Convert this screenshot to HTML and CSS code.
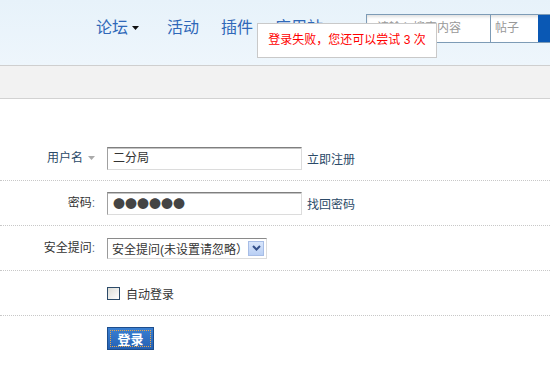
FILE: index.html
```html
<!DOCTYPE html>
<html lang="zh-CN">
<head>
    <meta charset="UTF-8">
    <meta name="viewport" content="width=device-width, initial-scale=1.0">
    <title>登录</title>
    <link rel="stylesheet" href="styles.css">
</head>
<body>

<div class="header">
    <ul class="nav">
        <li class="nav-item has-menu">论坛<svg class="caret" width="7" height="4" viewBox="0 0 7 4"><path d="M0 0H7L3.5 4Z" fill="#111"/></svg></li>
        <li class="nav-item">活动</li>
        <li class="nav-item">插件</li>
        <li class="nav-item">应用站</li>
    </ul>
    <div class="search">
        <span class="search-input">请输入搜索内容</span>
        <span class="search-type">帖子</span>
        <span class="search-btn"></span>
    </div>
    <div class="notice">登录失败，您还可以尝试 <span class="count">3</span> 次</div>
</div>
<div class="subbar"></div>

<div class="login">
    <div class="row">
        <span class="label label-user">用户名<svg class="tri" width="7" height="4" viewBox="0 0 7 4"><path d="M0 0H7L3.5 4Z" fill="#aaa"/></svg></span>
        <span class="field">二分局</span>
        <a class="link" href="#">立即注册</a>
    </div>
    <div class="row">
        <span class="label">密码<span class="colon">:</span></span>
        <span class="field field-pass">●●●●●●</span>
        <a class="link" href="#">找回密码</a>
    </div>
    <div class="row">
        <span class="label">安全提问<span class="colon">:</span></span>
        <span class="select">安全提问(未设置请忽略）<span class="select-arrow"><svg width="9" height="6" viewBox="0 0 9 6"><path d="M1 1L4.5 4.5L8 1" stroke="#34508a" stroke-width="2" fill="none"/></svg></span></span>
    </div>
    <div class="row">
        <span class="label"></span>
        <span class="checkbox"></span>
        <span class="check-text">自动登录</span>
    </div>
    <div class="row row-last">
        <span class="label"></span>
        <button class="submit">登录</button>
    </div>
</div>

</body>
</html>
```

FILE: styles.css
```css
body {
    margin: 0;
    width: 550px;
    overflow: hidden;
    font-family: "Liberation Sans", "Noto Sans CJK SC", sans-serif;
    font-size: 12px;
    color: #333;
    background: #fff;
}

.header {
    position: relative;
    display: flex;
    align-items: center;
    height: 56px;
    padding-bottom: 9px;
    background: linear-gradient(#e7f2fa, #eef6fc);
    border-bottom: 1px solid #cfcfcf;
    overflow: hidden;
    white-space: nowrap;
}

.nav {
    display: flex;
    flex-shrink: 0;
    margin: 0 0 0 96px;
    padding: 0;
    list-style: none;
}

.nav-item {
    display: flex;
    align-items: center;
    margin-right: 22px;
    font-size: 16px;
    line-height: 20px;
    color: #2f68b8;
}

.nav-item.has-menu {
    margin-right: 28px;
}

.caret {
    margin-left: 4px;
}

.search {
    display: flex;
    flex-shrink: 0;
    height: 27px;
    margin-left: 21px;
    border: 1px solid #7d9bb6;
    background: #fff;
    box-shadow: inset 0 2px 3px rgba(0, 0, 0, 0.12);
}

.search-input {
    width: 113px;
    padding-left: 10px;
    line-height: 27px;
    color: #999;
    border-right: 1px solid #7d9bb6;
}

.search-type {
    width: 43px;
    padding-left: 4px;
    line-height: 27px;
    color: #999;
}

.search-btn {
    width: 40px;
    background: #0a58b4;
}

.notice {
    position: absolute;
    left: 257px;
    top: 23px;
    width: 178px;
    height: 33px;
    line-height: 33px;
    text-align: center;
    color: #f00;
    background: #fff;
    border: 1px solid #c9c9c9;
}

.subbar {
    height: 32px;
    background: #f2f2f2;
    border-bottom: 1px solid #d2d2d2;
}

.login {
    margin-top: 37px;
}

.row {
    display: flex;
    align-items: center;
    height: 44px;
    border-bottom: 1px dotted #c8c8c8;
}

.row-last {
    border-bottom: none;
}

.label {
    display: flex;
    justify-content: flex-end;
    align-items: center;
    width: 95px;
    margin-right: 12px;
    line-height: 16px;
}

.label-user {
    color: #2b4a68;
}

.colon {
    color: #5a6f8a;
}

.tri {
    margin-left: 5px;
}

.field {
    box-sizing: border-box;
    width: 195px;
    height: 23px;
    padding-left: 5px;
    line-height: 21px;
    color: #333;
    border: 1px solid;
    border-color: #7f7f7f #dcdcdc #dcdcdc #a0a0a0;
    box-shadow: inset 0 1px 0 #c4c4c4;
}

.field-pass {
    font-family: "Noto Sans CJK SC", sans-serif;
    font-size: 12px;
    color: #444;
}

.link {
    margin-left: 5px;
    color: #2b4a68;
    text-decoration: none;
}

.select {
    box-sizing: border-box;
    display: flex;
    align-items: center;
    width: 160px;
    height: 21px;
    padding-left: 4px;
    color: #333;
    border: 1px solid;
    border-color: #8a8a8a #dcdcdc #dcdcdc #9a9a9a;
}

.select-arrow {
    display: flex;
    justify-content: center;
    align-items: center;
    width: 14px;
    height: 13px;
    margin-left: auto;
    margin-right: 2px;
    background: linear-gradient(#d9e6fb, #b9cff4);
    border: 1px solid #a7bde6;
}

.checkbox {
    box-sizing: border-box;
    width: 13px;
    height: 13px;
    border: 1px solid #2c4b69;
    background: linear-gradient(135deg, #dcdcd6, #fff);
}

.check-text {
    margin-left: 6px;
}

.submit {
    width: 47px;
    height: 23px;
    padding: 0;
    font-family: inherit;
    font-size: 13px;
    font-weight: bold;
    color: #fff;
    background: linear-gradient(#3a7fd2, #2461b4);
    border: 1px solid #1d4d8c;
    outline: 1px dotted #e8a64a;
    outline-offset: -4px;
}
```
